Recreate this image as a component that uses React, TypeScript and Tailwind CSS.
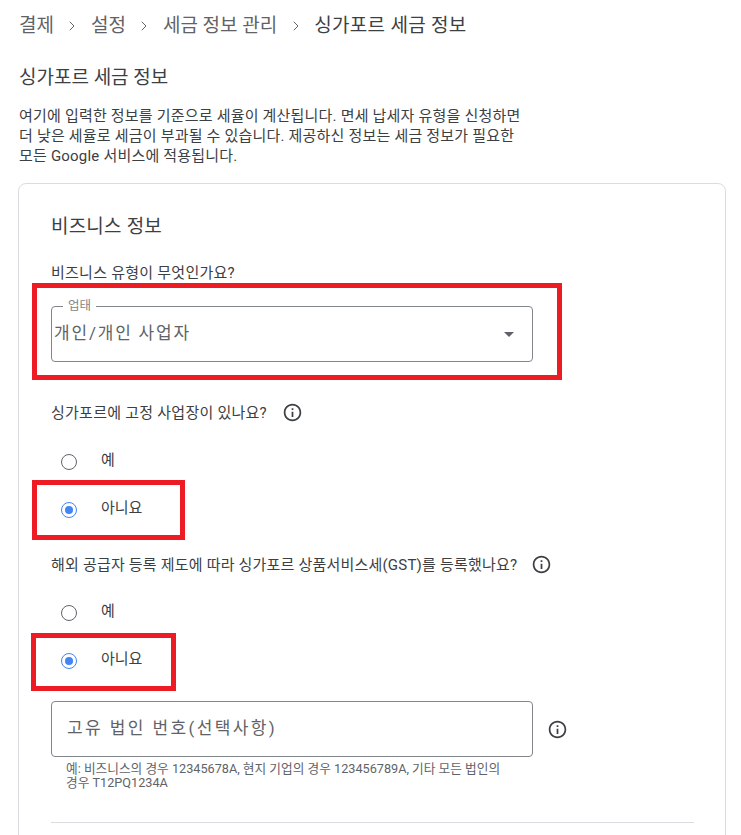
import { ChevronRight } from "lucide-react";

const FONT = "font-['Roboto','Noto_Sans_CJK_KR',sans-serif]";

function InfoIcon() {
  return (
    <svg width="21" height="21" viewBox="0 0 24 24" fill="#3c4043" className="shrink-0">
      <path d="M11 7h2v2h-2zm0 4h2v6h-2zm1-9C6.48 2 2 6.48 2 12s4.48 10 10 10 10-4.48 10-10S17.52 2 12 2zm0 18c-4.41 0-8-3.59-8-8s3.59-8 8-8 8 3.59 8 8-3.59 8-8 8z" />
    </svg>
  );
}

function Radio({ label, checked, outline }: { label: string; checked?: boolean; outline?: string }) {
  return (
    <div className="relative flex h-12 items-start pl-[10px]">
      <span className={`mt-[9px] flex h-4 w-4 items-center justify-center rounded-full border-[1.5px] ${checked ? "border-[#4285f4]" : "border-[#5f6368]"}`}>
        {checked ? <span className="h-2 w-2 rounded-full bg-[#4285f4]" /> : null}
      </span>
      <span className="ml-6 mt-[5px] text-[15px] leading-5 text-[#3c4043]">{label}</span>
      {outline ? <span className={`absolute border-[5px] border-[#ed1c24] ${outline}`} /> : null}
    </div>
  );
}

function Crumb({ label }: { label: string }) {
  return (
    <>
      <span className="text-[#5f6368]">{label}</span>
      <ChevronRight size={16} strokeWidth={1.5} className="mx-[10.5px] text-[#5f6368]" />
    </>
  );
}

export default function App() {
  return (
    <div className={`h-[835px] overflow-hidden bg-white pl-[18px] pr-4 ${FONT}`}>
      <div className="flex h-[52px] items-center pl-px text-[19px]">
        <Crumb label="결제" />
        <Crumb label="설정" />
        <Crumb label="세금 정보 관리" />
        <span className="tracking-[0.3px] text-[#3c4043]">싱가포르 세금 정보</span>
      </div>
      <h1 className="mt-[14px] pl-px text-[19px] leading-6 font-normal text-[#3c4043]">싱가포르 세금 정보</h1>
      <p className="mt-[16px] w-[510px] break-keep pl-px text-[15px] leading-5 tracking-[0.2px] text-[#3c4043]">
        여기에 입력한 정보를 기준으로 세율이 계산됩니다. 면세 납세자 유형을 신청하면 더 낮은 세율로 세금이 부과될 수 있습니다. 제공하신 정보는 세금 정보가 필요한 모든 Google 서비스에 적용됩니다.
      </p>
      <div className="mt-[17px] h-[700px] w-[708px] rounded-lg border border-[#dadce0] pl-[32px] pr-[31px] pt-[31px]">
        <h2 className="text-[19px] leading-6 tracking-[0.2px] font-normal text-[#3c4043]">비즈니스 정보</h2>
        <p className="mt-[24px] text-[15px] leading-5 tracking-[0.25px] text-[#3c4043]">비즈니스 유형이 무엇인가요?</p>
        <div className="relative mt-[23px] flex h-[56px] w-[482px] items-center justify-between rounded border border-[#80868b] pl-[2px] pr-[18px]">
          <span className="absolute left-[11px] top-[-8px] bg-white px-[5px] text-[12.5px] leading-[14px] text-[#80868b]">업태</span>
          <span className="text-[17px] tracking-[1.8px] text-[#5f6368]">개인/개인 사업자</span>
          <span className="mt-px h-0 w-0 border-x-[5px] border-t-[5px] border-x-transparent border-t-[#5f6368]" />
          <span className="absolute left-[-20px] top-[-24px] h-[97px] w-[530px] border-[5px] border-[#ed1c24]" />
        </div>
        <div className="mt-[40px] flex items-center">
          <span className="text-[15px] leading-5 tracking-[0.25px] text-[#3c4043]">싱가포르에 고정 사업장이 있나요?</span>
          <span className="ml-[15px]"><InfoIcon /></span>
        </div>
        <div className="mt-[22px]">
          <Radio label="예" />
          <Radio label="아니요" checked outline="left-[-19px] top-[-13px] h-[60px] w-[153px]" />
        </div>
        <div className="mt-[13px] flex items-center">
          <span className="text-[15px] leading-5 tracking-[0.2px] text-[#3c4043]">해외 공급자 등록 제도에 따라 싱가포르 상품서비스세(GST)를 등록했나요?</span>
          <span className="ml-[14px]"><InfoIcon /></span>
        </div>
        <div className="mt-[21px]">
          <Radio label="예" />
          <Radio label="아니요" checked outline="left-[-20px] top-[-11px] h-[58px] w-[145px]" />
        </div>
        <div className="mt-[9px] flex items-center">
          <div className="flex h-[56px] w-[482px] items-center rounded border border-[#80868b] pl-[15px] text-[17px] tracking-[2.4px] text-[#5f6368]">고유 법인 번호(선택사항)</div>
          <span className="ml-[14px]"><InfoIcon /></span>
        </div>
        <p className="mt-[5px] w-[470px] break-keep pl-[15px] text-[12.7px] leading-[14px] text-[#5f6368]">
          예: 비즈니스의 경우 12345678A, 현지 기업의 경우 123456789A, 기타 모든 법인의 경우 T12PQ1234A
        </p>
        <div className="mt-[32px] border-t border-[#dadce0]" />
      </div>
    </div>
  );
}
